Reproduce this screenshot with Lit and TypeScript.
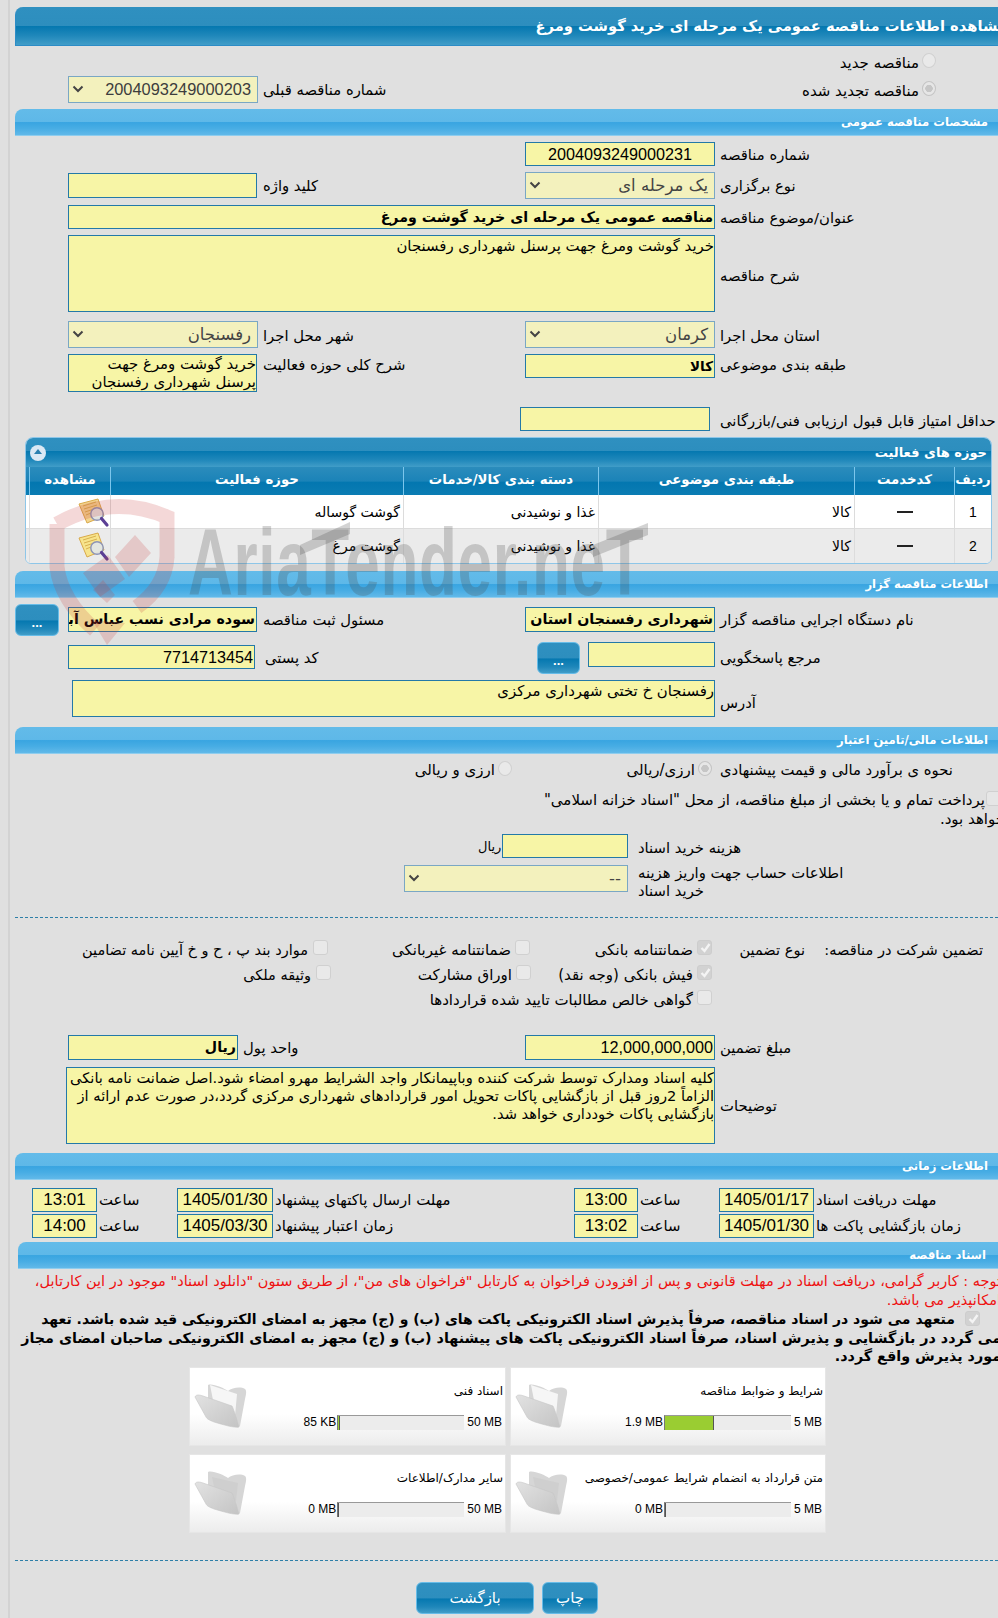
import { LitElement, html, css, svg } from "lit";
import { customElement } from "lit/decorators.js";

const chevron = html`<svg class="chev" width="12" height="8" viewBox="0 0 12 8"><path d="M1.5 1.5 6 6l4.5-4.5" fill="none" stroke="#444" stroke-width="2"/></svg>`;
const check = html`<svg width="15" height="15" viewBox="0 0 15 15"><path d="M3.5 8 6.5 11 11.5 4" fill="none" stroke="#f4f4f4" stroke-width="2.4"/></svg>`;

const noteIcon = (pale: boolean) => html`<svg class="note" width="33" height="32" viewBox="0 0 33 32">
  <path d="M2 6 21 1l6 17-17 7z" fill="${pale ? "#f3d58f" : "#f7e48c"}" stroke="#d9a94a" stroke-width="1"/>
  <path d="M6 8l13-4M7 11l13-4M8 14l9-3M9 17l5-2" stroke="#d8b050" stroke-width="1"/>
  <circle cx="20" cy="16" r="6.2" fill="#dfe6ee" fill-opacity=".85" stroke="#8d94b5" stroke-width="1.4"/>
  <path d="M24.5 20.5 30 27" stroke="#5b3f95" stroke-width="3.2" stroke-linecap="round"/>
</svg>`;

const folder = (paper: boolean) => html`<svg class="folder" width="54" height="48" viewBox="0 0 54 48">
  <defs><linearGradient id="fg" x1="0" y1="0" x2="1" y2="1"><stop offset="0" stop-color="#e2e2e2"/><stop offset="1" stop-color="#c4c4c4"/></linearGradient></defs>
  <path d="M14 3 C18 1 30 6 34 9 C38 6 46 4 51 7 C53 9 52 13 51 17 L46 44 C44 46 42 45 41 44 L14 16Z" fill="#d6d6d6"/>
  ${paper ? svg`<path d="M16 3 43 12 41 34 19 18Z" fill="#f6f6f6"/>` : svg`<path d="M18 8 44 14 42 32 20 18Z" fill="#cfcfcf"/>`}
  <path d="M1 15 C2 12 6 13 9 14 L38 24 C40 28 43 38 45 45 C40 46 30 43 20 40 C15 38 13 37 12 35 Z" fill="url(#fg)" stroke="#c6c6c6" stroke-width=".6"/>
</svg>`;

@customElement("app-root")
export class AppRoot extends LitElement {
  static styles = css`
    :host { display: block; width: 998px; height: 1618px; overflow: hidden; position: relative; }
    * { box-sizing: border-box; }
    .page {
      width: 998px; height: 1618px; padding-top: 7px; position: relative; overflow: hidden;
      color: #000; font: 14px/18px "Liberation Sans", "DejaVu Sans", sans-serif;
      background: linear-gradient(90deg, #e0e0e0 8px, #d3d3d3 8px, #d3d3d3 10px, #e0e0e0 10px);
    }

    .title {
      margin-left: 15px; height: 39px; direction: rtl; padding-right: 0; white-space: nowrap; overflow: hidden;
      border-left: 1px solid #2c8cc6; border-bottom: 1px solid #2c8cc6; border-top-left-radius: 8px;
      color: #fff; font: bold 14.7px/38px "DejaVu Sans", sans-serif;
      background: linear-gradient(180deg, #2f90c0 0, #2d8ebe 50%, #0578b0 51%, #1f87ba 75%, #419dc8 100%);
    }
    .title span { display: inline-block; margin-right: -9px; }
    .sec {
      margin-left: 15px; height: 27px; direction: rtl; padding-right: 10px; white-space: nowrap;
      border-top-left-radius: 8px; border-bottom: 1px solid #8fcdee;
      color: #fff; font: bold 11.6px/27px "DejaVu Sans", sans-serif;
      background: linear-gradient(180deg, #63bbe9 0, #5eb8e8 50%, #39a5e1 52%, #48ade4 75%, #61b9e9 100%);
    }
    .mt6 { margin-top: 6px; } .mt7 { margin-top: 7px; } .mt9 { margin-top: 9px; } .mt10 { margin-top: 10px; }

    .row { display: grid; grid-template-columns: 68px 190px 267px 190px 1fr; align-items: start; }
    .c2 { grid-column: 2; } .c3 { grid-column: 3; } .c4 { grid-column: 4; } .c5 { grid-column: 5; }
    .wide { grid-column: 2 / 5; }
    .lbl {
      direction: rtl; text-align: left; font: 14.8px/26px "DejaVu Sans", sans-serif; white-space: nowrap;
      padding-left: 5px;
    }
    .inp, .ta, .sel {
      direction: rtl; overflow: hidden; white-space: nowrap; padding: 0 1px;
      background: #f7f5a6; border: 1px solid #2379a8; font-size: 16.2px; line-height: 22px; height: 24px;
    }
    .inp.c2, .ta.c2 { width: 189px; }
    .sel {
      background: #f3f1bd; border-color: #7aa7c4; height: 27px; line-height: 25px; position: relative;
      padding-right: 6px; color: #444; font-family: "DejaVu Sans", "Liberation Sans", sans-serif; font-size: 16.5px;
    }
    .sel.num { font-family: "Liberation Sans", sans-serif; font-size: 16.4px; color: #3d3d3d; }
    .chev { position: absolute; left: 3px; top: 8px; }
    .inp.b { font-weight: bold; font-family: "DejaVu Sans", sans-serif; font-size: 14.2px; }
    .ctr { text-align: center; }
    .ta {
      white-space: normal; font-family: "DejaVu Sans", sans-serif; font-size: 14.9px; line-height: 18px; padding: 1px 0 0 0;
    }
    .rad, .chk {
      flex: none; width: 14px; height: 15px; background: #e9e9e9; border: 1px solid #d0d0d0;
    }
    .rad { border-radius: 50%; margin-top: -4px; }
    .rad.on { background: radial-gradient(circle, #c6c6c6 0 3.5px, #e6e6e6 4px); border-color: #c4c4c4; }
    .chk { width: 15px; border-radius: 3px; border-width: 1.5px; display: block; margin-top: -4px; }
    .chk.on { background: #d2d2d2; border-color: #cdcdcd; }
    .chk svg { display: block; margin: -1.5px; }
    .pick { display: flex; direction: rtl; align-items: center; gap: 3px; font: 15px/20px "DejaVu Sans", sans-serif; white-space: nowrap; }

    .r-radio1 { height: 30px; padding: 3px 62px 0 0; display: flex; justify-content: flex-end; }
    .r-prev { margin-top: 0; height: 27px; }
    .r-prev .lbl { line-height: 27px; }
    .r-prev .pick { grid-column: 5; margin-right: 62px; height: 27px; margin-top: 1px; }
    .r-a { margin-top: 6px; height: 24px; }
    .r-b { margin-top: 6px; height: 27px; }
    .r-b .c2.inp { height: 25px; margin-top: 1px; }
    .r-b .lbl { line-height: 28px; }
    .r-c { margin-top: 6px; height: 24px; }
    .r-d { margin-top: 6px; height: 77px; }
    .r-d .ta { height: 77px; }
    .r-d .lbl { line-height: 81px; }
    .r-e { margin-top: 9px; height: 27px; }
    .r-e .lbl { line-height: 29px; }
    .r-f { margin-top: 6px; height: 38px; }
    .r-f .ta { height: 38px; line-height: 17.5px; }
    .r-f .c2 { height: 38px; }
    .r-f .inp { height: 24px; font-size: 13.5px; }
    .r-f .lbl { line-height: 21px; }
    .r-g { margin-top: 15px; height: 24px; }
    .r-g .inp { width: 190px; margin-left: -5px; }
    .r-g .lbl { line-height: 27px; }

    .gridbox {
      margin: 6px 6px 0 25px; height: 127px; border: 1px solid #8ec6e8; border-radius: 8px 8px 6px 6px; overflow: hidden;
      background: #fff;
    }
    .gt {
      height: 29px; direction: rtl; display: flex; align-items: center; justify-content: space-between;
      padding: 0 4px 0 4px; color: #fff; font: bold 13px/28px "DejaVu Sans", sans-serif;
      background: linear-gradient(180deg, #2f90c0 0, #2d8ebe 45%, #0578b0 46%, #1f87ba 75%, #419dc8 100%);
    }
    .tog { width: 16px; height: 16px; border-radius: 50%; background: #dbe8f4; position: relative; display: block; }
    .tog::after {
      content: ""; position: absolute; left: 3.5px; top: 4px; border: 4.5px solid transparent; border-bottom: 5px solid #2b7fb0; border-top: 0;
    }
    .trow { display: grid; grid-template-columns: 3px 81px 293px 195px 256px 100px 1fr; }
    .th {
      height: 28px; background: linear-gradient(180deg, #2b8cbc 0, #1b83b8 50%, #0377b0 55%, #0b7cb3 100%);
      color: #fff; font: bold 13.3px/25px "DejaVu Sans", sans-serif; text-align: center; direction: rtl; white-space: nowrap;
    }
    .th .hc { height: 100%; border-left: 1px solid #7cc6ec; }
    .trow.d { height: 34px; background: #fff; border-bottom: 1px solid #dcdcdc; font: 14px/35px "DejaVu Sans", sans-serif; direction: ltr; }
    .trow.alt { background: #ebebeb; height: 35px; border-bottom: 0; }
    .td { border-left: 1px solid #dcdcdc; direction: rtl; padding-right: 3px; white-space: nowrap; height: 100%; }
    .td.cc { text-align: center; padding: 0; }
    .td.num { font-family: "Liberation Sans", sans-serif; font-size: 14px; }
    .dash { display: block; width: 16px; height: 2px; background: #222; margin: 16px auto 0; }
    .note { display: block; margin: 3px 0 0 47px; }

    .r-h { margin-top: 6px; height: 32px; position: relative; }
    .r-h .inp { margin-top: 3px; height: 25px; }
    .r-h .lbl { margin-top: 3px; line-height: 26px; }
    .dots {
      display: block; height: 32px; border-radius: 6px; border: 1px solid #66bce8; color: #fff; font: bold 13px/36px "Liberation Sans", sans-serif;
      text-align: center; background: linear-gradient(180deg, #2f90c0 0, #2d8ebe 50%, #0578b0 53%, #1f87ba 80%, #419dc8 100%);
    }
    .r-h .dots { position: absolute; left: 15px; top: 0; width: 44px; }
    .r-i { margin-top: 6px; height: 32px; position: relative; }
    .r-i .c2.inp { width: 187px; margin-top: 3px; }
    .r-i .c4 { display: flex; justify-content: space-between; align-items: flex-start; margin-left: 12px; width: 178px; }
    .r-i .c4 .inp { width: 127px; height: 25px; }
    .r-i .c4 .dots { width: 43px; }
    .r-i .lbl { line-height: 26px; margin-top: 3px; }
    .r-i .c3 { margin-left: 2px; }
    .r-j { margin-top: 6px; height: 37px; }
    .r-j .ta { height: 37px; margin-left: 4px; }
    .r-j .lbl { line-height: 46px; }

    .fin { display: grid; grid-template-columns: 512px 200px 1fr; margin-top: 5px; height: 22px; align-items: center; }
    .fin .lbl { padding-left: 8px; line-height: 22px; }
    .pay { margin-top: 8px; direction: rtl; width: 1005px; font: 15px/19px "DejaVu Sans", sans-serif; white-space: nowrap; position: relative; padding-right: 20px; height: 38px; }
    .pay .chk { position: absolute; right: 4px; top: 2px; background: #e6e6e6; margin: 0; }
    .pay .t1 { display: block; padding-top: 2px; }
    .pay .l2 { display: block; margin-right: -20px; }
    .cost { display: grid; grid-template-columns: 502px 126px 1fr; margin-top: 7px; height: 24px; }
    .cost .inp { height: 24px; }
    .cost .rl { direction: rtl; text-align: left; padding-left: 478px; font: 13px/26px "DejaVu Sans", sans-serif; white-space: nowrap; }
    .cost .lbl { padding-left: 10px; line-height: 27px; }
    .acc { display: grid; grid-template-columns: 404px 224px 1fr; margin-top: 7px; height: 36px; }
    .acc .txt { direction: rtl; text-align: left; width: 215px; margin-left: 10px; font: 14.8px/18px "DejaVu Sans", sans-serif; margin-top: -1px; }
    .rule { margin: 16px 0 0 15px; border: 0; border-top: 1px dashed #2d7fa8; height: 0; }
    .gua { display: grid; grid-template-columns: 328px 202px 182px 93px 178px; height: 25px; align-items: center; }
    .gua .pick { justify-content: flex-start; gap: 4px; }
    .gua .pick:first-child { font-size: 14.5px; gap: 5px; }
    .gua .t { direction: rtl; font: 14.6px/20px "DejaVu Sans", sans-serif; white-space: nowrap; }
    .g1 { margin-top: 19px; }
    .g2 { grid-template-columns: 331px 200px 181px; }
    .r-k { margin-top: 23px; height: 25px; }
    .r-k .inp { height: 25px; }
    .r-k .lbl { line-height: 25px; }
    .r-k .c2.inp { width: 170px; }
    .r-k .c3 { margin-left: -20px; }
    .r-l { margin-top: 7px; height: 77px; }
    .r-l .ta { height: 77px; margin-left: -2px; line-height: 18px; font-size: 14.65px; white-space: nowrap; }
    .r-l .lbl { line-height: 78px; }

    .tm { display: grid; grid-template-columns: 32px 65px 80px 96px 301px 64px 81px 95px 1fr; height: 25px; }
    .tm .inp { height: 24px; text-align: center; padding: 0; font-size: 17px; }
    .tm .lb { direction: rtl; text-align: left; padding-left: 2px; font: 14.9px/24px "DejaVu Sans", sans-serif; white-space: nowrap; }
    .tm1 { margin-top: 8px; }
    .tm2 { margin-top: 1px; }
    .sec.s5 { margin: 3px 0 0 18px; padding-right: 12px; }
    .red { margin-top: 3px; height: 37px; direction: rtl; color: #ee1111; font: 14.5px/18.5px "DejaVu Sans", sans-serif; white-space: nowrap; width: 1001px; }
    .bold { margin-top: 1px; width: 1001px; height: 57px; position: relative; direction: rtl; font: bold 14.3px/18.6px "DejaVu Sans", sans-serif; white-space: nowrap; }
    .bold .chk { position: absolute; right: 21px; top: 1px; margin: 0; }
    .bold .first { padding-right: 46px; display: block; font-size: 14px; }
    .cards {
      margin: 0 172px 0 189px; display: grid; grid-template-columns: 316px 317px; direction: rtl; gap: 8px 4px;
    }
    .card {
      height: 79px; direction: ltr; display: flex; padding: 0 2px 0 4px; position: relative;
      background: linear-gradient(180deg, #fff 0, #fff 60%, #ececec 100%); border: 1px solid #e6e6e6;
    }
    .folder { flex: none; margin-top: 14px; display: block; }
    .cbody { flex: 1; display: flex; flex-direction: column; }
    .ct { direction: rtl; font: 12px/18px "DejaVu Sans", sans-serif; margin-top: 14px; height: 33px; white-space: nowrap; }
    .pr { display: flex; justify-content: flex-end; align-items: center; font: 12px/15px "Liberation Sans", sans-serif; gap: 1px; white-space: nowrap; }
    .barx { width: 127px; height: 15px; background: #ececec; border-top: 1px solid #999; border-left: 1px solid #777; flex: none; }
    .barx i { display: block; height: 100%; background: #9acd32; border-right: 1px solid #555; }
    .pr .max { margin: 0 1px 0 2px; }
    .rule2 { margin: 27px 0 0 15px; border: 0; border-top: 1px dashed #2d7fa8; height: 0; }
    .btns { margin: 21px 0 0 416px; display: flex; gap: 8px; }
    .btn {
      height: 32px; border-radius: 6px; border: 1px solid #66bce8; color: #fff; font: 15px/30px "DejaVu Sans", sans-serif; text-align: center; direction: rtl;
      background: linear-gradient(180deg, #2f90c0 0, #2d8ebe 50%, #0578b0 53%, #1f87ba 80%, #419dc8 100%);
    }
    .btn.a { width: 118px; } .btn.b { width: 56px; }

    .wm { position: absolute; left: 0; top: 0; width: 998px; height: 1618px; pointer-events: none; }
    .wm svg { position: absolute; left: 45px; top: 495px; }
    .wm svg.bars { left: 290px; top: 515px; }
    .wmt {
      position: absolute; left: 188px; top: 508px; font: bold 94px/110px "Liberation Sans", sans-serif; color: rgba(70,70,70,.24);
      transform-origin: 0 0; transform: scaleX(.66); white-space: nowrap; letter-spacing: 1px;
    }
  `;

  private card(title: string, used: string, max: string, fill: number, paper: boolean) {
    return html`<div class="card">${folder(paper)}<div class="cbody">
      <div class="ct">${title}</div>
      <div class="pr"><span>${used}</span><div class="barx"><i style="width:${fill}px"></i></div><span class="max">${max}</span></div>
    </div></div>`;
  }

  private tableRow(n: string, sub: string, cat: string, act: string, pale: boolean, alt: boolean) {
    return html`<div class="trow d ${alt ? "alt" : ""}">
      <div></div>
      <div class="td cc">${noteIcon(pale)}</div>
      <div class="td">${act}</div>
      <div class="td">${cat}</div>
      <div class="td">${sub}</div>
      <div class="td cc"><span class="dash"></span></div>
      <div class="td cc num">${n}</div>
    </div>`;
  }

  render() {
    return html`<div class="page">
      <div class="title"><span>مشاهده اطلاعات مناقصه عمومی یک مرحله ای خرید گوشت ومرغ</span></div>

      <div class="r-radio1"><div class="pick"><span class="rad"></span><span>مناقصه جدید</span></div></div>
      <div class="row r-prev">
        <div class="sel num c2">${chevron}2004093249000203</div>
        <div class="lbl c3">شماره مناقصه قبلی</div>
        <div class="pick"><span class="rad on"></span><span>مناقصه تجدید شده</span></div>
      </div>

      <div class="sec mt6">مشخصات مناقصه عمومی</div>
      <div class="row r-a"><div class="inp c4 ctr">2004093249000231</div><div class="lbl">شماره مناقصه</div></div>
      <div class="row r-b">
        <div class="inp c2"></div><div class="lbl">کلید واژه</div>
        <div class="sel c4">${chevron}یک مرحله ای</div><div class="lbl">نوع برگزاری</div>
      </div>
      <div class="row r-c"><div class="inp b wide">مناقصه عمومی یک مرحله ای خرید گوشت ومرغ</div><div class="lbl">عنوان/موضوع مناقصه</div></div>
      <div class="row r-d"><div class="ta wide">خرید گوشت ومرغ جهت پرسنل شهرداری رفسنجان</div><div class="lbl">شرح مناقصه</div></div>
      <div class="row r-e">
        <div class="sel c2">${chevron}رفسنجان</div><div class="lbl">شهر محل اجرا</div>
        <div class="sel c4">${chevron}کرمان</div><div class="lbl">استان محل اجرا</div>
      </div>
      <div class="row r-f">
        <div class="ta c2">خرید گوشت ومرغ جهت پرسنل شهرداری رفسنجان</div><div class="lbl">شرح کلی حوزه فعالیت</div>
        <div class="inp b c4">کالا</div><div class="lbl">طبقه بندی موضوعی</div>
      </div>
      <div class="row r-g"><div class="inp c4"></div><div class="lbl">حداقل امتیاز قابل قبول ارزیابی فنی/بازرگانی</div></div>

      <div class="gridbox">
        <div class="gt"><span>حوزه های فعالیت</span><span class="tog"></span></div>
        <div class="trow">
          <div class="th"></div>
          <div class="th"><div class="hc">مشاهده</div></div>
          <div class="th"><div class="hc">حوزه فعالیت</div></div>
          <div class="th"><div class="hc">دسته بندی کالا/خدمات</div></div>
          <div class="th"><div class="hc">طبقه بندی موضوعی</div></div>
          <div class="th"><div class="hc">کدخدمت</div></div>
          <div class="th"><div class="hc">ردیف</div></div>
        </div>
        ${this.tableRow("1", "کالا", "غذا و نوشیدنی", "گوشت گوساله", true, false)}
        ${this.tableRow("2", "کالا", "غذا و نوشیدنی", "گوشت مرغ", false, true)}
      </div>

      <div class="sec mt7">اطلاعات مناقصه گزار</div>
      <div class="row r-h">
        <div class="dots">...</div>
        <div class="inp b c2">سوده مرادی نسب عباس آبادی</div><div class="lbl">مسئول ثبت مناقصه</div>
        <div class="inp b c4">شهرداری رفسنجان استان کرمان</div><div class="lbl">نام دستگاه اجرایی مناقصه گزار</div>
      </div>
      <div class="row r-i">
        <div class="inp c2">7714713454</div><div class="lbl c3">کد پستی</div>
        <div class="c4"><div class="dots">...</div><div class="inp"></div></div><div class="lbl">مرجع پاسخگویی</div>
      </div>
      <div class="row r-j"><div class="ta wide">رفسنجان خ تختی شهرداری مرکزی</div><div class="lbl">آدرس</div></div>

      <div class="sec mt10">اطلاعات مالی/تامین اعتبار</div>
      <div class="fin">
        <div class="pick"><span class="rad"></span><span>ارزی و ریالی</span></div>
        <div class="pick"><span class="rad on"></span><span>ارزی/ریالی</span></div>
        <div class="lbl">نحوه ی برآورد مالی و قیمت پیشنهادی</div>
      </div>
      <div class="pay"><span class="chk"></span><span class="t1">پرداخت تمام و یا بخشی از مبلغ مناقصه، از محل "اسناد خزانه اسلامی"</span><span class="l2">خواهد بود.</span></div>
      <div class="cost"><div class="rl">ریال</div><div class="inp"></div><div class="lbl">هزینه خرید اسناد</div></div>
      <div class="acc"><div></div><div class="sel">${chevron}--</div><div class="txt">اطلاعات حساب جهت واریز هزینه خرید اسناد</div></div>
      <hr class="rule" />
      <div class="gua g1">
        <div class="pick"><span class="chk"></span><span>موارد بند پ ، ح و خ آیین نامه تضامین</span></div>
        <div class="pick"><span class="chk"></span><span>ضمانتنامه غیربانکی</span></div>
        <div class="pick"><span class="chk on">${check}</span><span>ضمانتنامه بانکی</span></div>
        <div class="t">نوع تضمین</div>
        <div class="t">تضمین شرکت در مناقصه:</div>
      </div>
      <div class="gua g2">
        <div class="pick"><span class="chk"></span><span>وثیقه ملکی</span></div>
        <div class="pick"><span class="chk"></span><span>اوراق مشارکت</span></div>
        <div class="pick"><span class="chk on">${check}</span><span>فیش بانکی (وجه نقد)</span></div>
      </div>
      <div class="gua g3">
        <div></div><div></div>
        <div class="pick"><span class="chk"></span><span>گواهی خالص مطالبات تایید شده قراردادها</span></div>
      </div>
      <div class="row r-k">
        <div class="inp b c2">ریال</div><div class="lbl c3">واحد پول</div>
        <div class="inp c4">12,000,000,000</div><div class="lbl">مبلغ تضمین</div>
      </div>
      <div class="row r-l">
        <div class="ta wide">کلیه اسناد ومدارک توسط شرکت کننده وباپیمانکار واجد الشرایط مهرو امضاء شود.اصل ضمانت نامه بانکی<br />الزاماً 2روز قبل از بازگشایی پاکات تحویل امور قراردادهای شهرداری مرکزی گردد،در صورت عدم ارائه از<br />بازگشایی پاکات خودداری خواهد شد.</div>
        <div class="lbl">توضیحات</div>
      </div>

      <div class="sec mt9">اطلاعات زمانی</div>
      <div class="tm tm1">
        <div></div><div class="inp">13:01</div><div class="lb">ساعت</div>
        <div class="inp">1405/01/30</div><div class="lb">مهلت ارسال پاکتهای پیشنهاد</div>
        <div class="inp">13:00</div><div class="lb">ساعت</div>
        <div class="inp">1405/01/17</div><div class="lb">مهلت دریافت اسناد</div>
      </div>
      <div class="tm tm2">
        <div></div><div class="inp">14:00</div><div class="lb">ساعت</div>
        <div class="inp">1405/03/30</div><div class="lb">زمان اعتبار پیشنهاد</div>
        <div class="inp">13:02</div><div class="lb">ساعت</div>
        <div class="inp">1405/01/30</div><div class="lb">زمان بازگشایی پاکت ها</div>
      </div>

      <div class="sec s5">اسناد مناقصه</div>
      <div class="red">توجه : کاربر گرامی، دریافت اسناد در مهلت قانونی و پس از افزودن فراخوان به کارتابل "فراخوان های من"، از طریق ستون "دانلود اسناد" موجود در این کارتابل،<br />امکانپذیر می باشد.</div>
      <div class="bold"><span class="chk on">${check}</span><span class="first">متعهد می شود در اسناد مناقصه، صرفاً پذیرش اسناد الکترونیکی پاکت های (ب) و (ج) مجهز به امضای الکترونیکی قید شده باشد. تعهد</span>می گردد در بازگشایی و پذیرش اسناد، صرفاً اسناد الکترونیکی پاکت های پیشنهاد (ب) و (ج) مجهز به امضای الکترونیکی صاحبان امضای مجاز<br />مورد پذیرش واقع گردد.</div>

      <div class="cards">
        ${this.card("شرایط و ضوابط مناقصه", "1.9 MB", "5 MB", 49, true)}
        ${this.card("اسناد فنی", "85 KB", "50 MB", 2, true)}
        ${this.card("متن قرارداد به انضمام شرایط عمومی/خصوصی", "0 MB", "5 MB", 0, false)}
        ${this.card("سایر مدارک/اطلاعات", "0 MB", "50 MB", 0, false)}
      </div>
      <hr class="rule2" />
      <div class="btns"><div class="btn a">بازگشت</div><div class="btn b">چاپ</div></div>

      <div class="wm">
        <svg width="140" height="150" viewBox="0 0 140 150">
          <path d="M12 29 Q67 -2 122 22 V62 Q120 92 92 112 M12 29 V72 Q16 105 50 135" fill="none" stroke="rgba(200,60,60,.2)" stroke-width="15"/>
          <path d="M38 78 63 60 80 84 55 102Z M70 62 90 40 106 58 84 82Z" fill="rgba(200,60,60,.2)"/>
          <path d="M62 108 70 100 58 85 48 95Z M47 125 62 150 80 128Z" fill="rgba(200,60,60,.2)"/>
        </svg>
        <svg class="bars" width="370" height="50" viewBox="0 0 370 50">
          <path d="M10 30 60 7V19L10 40Z M303 30 358 8V20L303 42Z" fill="rgba(70,70,70,.24)"/>
        </svg>
        <div class="wmt">AriaTender.neT</div>
      </div>
    </div>`;
  }
}
